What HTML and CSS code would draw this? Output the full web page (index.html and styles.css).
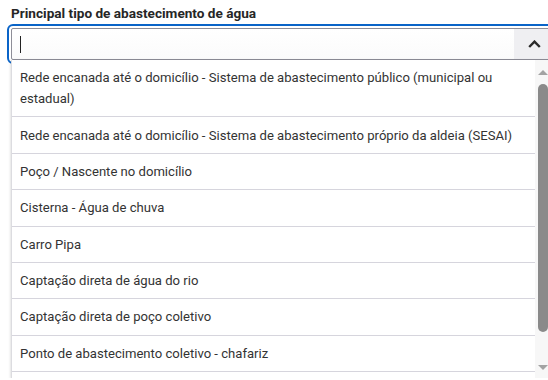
FILE: index.html
```html
<!DOCTYPE html>
<html lang="pt">
<head>
    <meta charset="UTF-8">
    <meta name="viewport" content="width=device-width, initial-scale=1.0">
    <title>Abastecimento de água</title>
    <link rel="stylesheet" href="styles.css">
</head>
<body>
    <div class="field">
        <label class="field-label" for="agua">Principal tipo de abastecimento de água</label>

        <div class="combo">
            <div class="combo-input">
                <span class="caret"></span>
            </div>
            <div class="combo-toggle">
                <svg width="13" height="8" viewBox="0 0 13 8">
                    <path d="M1.2 7 L6.5 1.6 L11.8 7" fill="none" stroke="#2a2a2a" stroke-width="2.4"/>
                </svg>
            </div>
        </div>

        <div class="options">
            <ul class="option-list">
                <li>Rede encanada até o domicílio - Sistema de abastecimento público (municipal ou estadual)</li>
                <li>Rede encanada até o domicílio - Sistema de abastecimento próprio da aldeia (SESAI)</li>
                <li>Poço / Nascente no domicílio</li>
                <li>Cisterna - Água de chuva</li>
                <li>Carro Pipa</li>
                <li>Captação direta de água do rio</li>
                <li>Captação direta de poço coletivo</li>
                <li>Ponto de abastecimento coletivo - chafariz</li>
            </ul>
            <div class="scrollbar">
                <span class="arrow-up"></span>
                <span class="thumb"></span>
                <span class="arrow-down"></span>
            </div>
        </div>
    </div>
</body>
</html>
```

FILE: styles.css
```css
* {
    margin: 0;
    padding: 0;
    box-sizing: border-box;
}

body {
    font-family: 'Roboto', 'Liberation Sans', sans-serif;
    color: #333;
    background-color: #fff;
    overflow: hidden;
}

/* Field */
.field {
    width: 550px;
    padding-left: 11px;
}

.field-label {
    display: block;
    margin-top: 5px;
    font-size: 13.6px;
    line-height: 17px;
    font-weight: bold;
    color: #262626;
}

/* Combo input */
.combo {
    display: flex;
    height: 32px;
    margin-top: 6px;
    border: 1px solid #8e8e98;
    border-radius: 2px;
    outline: 2px solid #0a64c8;
    outline-offset: 2px;
    background: linear-gradient(#fff, #fbfbfb);
}

.combo-input {
    flex: 1;
    display: flex;
    align-items: center;
    padding-left: 8px;
}

.caret {
    width: 1px;
    height: 17px;
    background-color: #222;
}

.combo-toggle {
    width: 35px;
    display: flex;
    align-items: center;
    padding-left: 14px;
    background-color: #efeff2;
}

/* Dropdown options */
.options {
    position: relative;
    z-index: 1;
    display: flex;
    height: 318px;
    overflow: hidden;
    background-color: #fff;
    border-left: 1px solid #dcdce0;
    box-shadow: 0 1px 3px rgba(0, 0, 0, 0.2);
}

.option-list {
    flex: 1;
    list-style: none;
}

.option-list li {
    padding: 7.2px 8px;
    font-size: 13.1px;
    line-height: 21px;
    border-bottom: 1px solid #d6d5dd;
}

/* Scrollbar */
.scrollbar {
    width: 15px;
    display: flex;
    flex-direction: column;
    align-items: center;
    padding: 10px 0 8px;
    background-color: #f7f7f7;
}

.arrow-up,
.arrow-down {
    width: 0;
    height: 0;
    border-left: 5px solid transparent;
    border-right: 5px solid transparent;
}

.arrow-up {
    border-bottom: 5px solid #a3a3a3;
}

.arrow-down {
    margin-top: auto;
    border-top: 5px solid #a3a3a3;
}

.thumb {
    width: 10px;
    height: 248px;
    margin-top: 9px;
    border-radius: 5px;
    background-color: #8a8a8a;
}
```
